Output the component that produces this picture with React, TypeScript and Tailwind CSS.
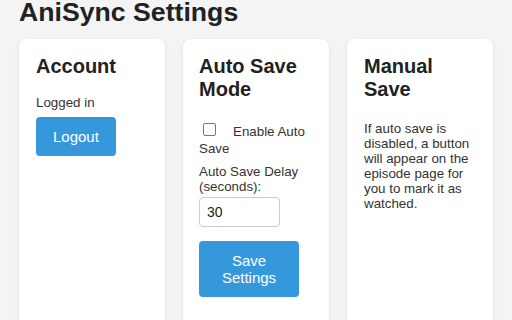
import React from 'react';

const font = { fontFamily: '"Liberation Sans", Arial, sans-serif' };

export default function App() {
    return (
        <div className="min-h-[320px] bg-[#f4f4f4] px-[19px] text-[#333] overflow-hidden" style={font}>
            <h1 className="text-[26.67px] font-bold leading-[24px] text-[#222] mb-[15px]">AniSync Settings</h1>

            <div className="grid grid-cols-3 gap-[18px]">
                {/* Account */}
                <div className="bg-white rounded-[8px] shadow-[0_1px_4px_rgba(0,0,0,0.08)] px-[17px] pt-[16px] pb-[40px]">
                    <h2 className="text-[20px] font-bold leading-[23px] text-[#222] mb-[17px]">Account</h2>
                    <p className="text-[13.33px] leading-[15px] mb-[7px]">Logged in</p>
                    <button className="bg-[#3498db] text-white text-[15px] leading-[17px] rounded-[4px] px-[17px] py-[11px]">
                        Logout
                    </button>
                </div>

                {/* Auto save */}
                <div className="bg-white rounded-[8px] shadow-[0_1px_4px_rgba(0,0,0,0.08)] px-[16px] pt-[16px] pb-[40px]">
                    <h2 className="text-[20px] font-bold leading-[23px] text-[#222] mb-[22px]">Auto Save Mode</h2>
                    <label className="block text-[13.33px] leading-[17px]">
                        <input
                            type="checkbox"
                            className="appearance-none w-[13px] h-[13px] border border-[#767676] rounded-[2px] bg-white ml-[4px] mr-[17px] align-[0px]"
                        />
                        Enable Auto Save
                    </label>
                    <label className="block text-[13.33px] leading-[15px] mt-[7px] mb-[3px]">Auto Save Delay (seconds):</label>
                    <input
                        type="number"
                        defaultValue={30}
                        className="block w-[81px] h-[30px] border border-[#ccc] rounded-[4px] px-[7px] text-[14px] text-[#222] outline-none"
                    />
                    <button className="mt-[14px] w-[100px] bg-[#3498db] text-white text-[15px] leading-[17px] rounded-[4px] px-[17px] py-[11px]">
                        Save Settings
                    </button>
                </div>

                {/* Manual save */}
                <div className="bg-white rounded-[8px] shadow-[0_1px_4px_rgba(0,0,0,0.08)] px-[17px] pt-[16px] pb-[40px]">
                    <h2 className="text-[20px] font-bold leading-[23px] text-[#222] mb-[20px]">Manual Save</h2>
                    <p className="text-[13.33px] leading-[15px]">
                        If auto save is disabled, a button will appear on the episode page for you to mark it as watched.
                    </p>
                </div>
            </div>
        </div>
    );
}
